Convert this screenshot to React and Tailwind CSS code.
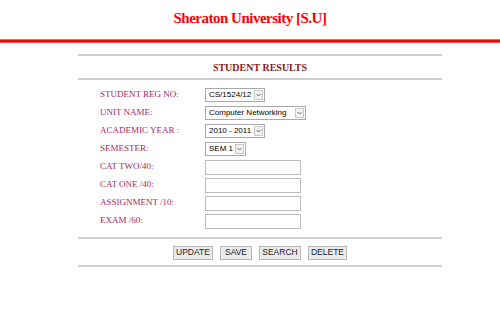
import React from "react";

const serif = { fontFamily: '"Liberation Serif", "Times New Roman", serif' };
const sans = { fontFamily: '"Liberation Sans", Arial, sans-serif' };

function Select({ value, w }) {
  return (
    <div className={`flex h-[14px] items-stretch border border-[#a9a9a9] bg-white ${w}`} style={sans}>
      <div className="flex-1 pl-[3px] text-[8px] leading-[12px] text-black whitespace-nowrap overflow-hidden">{value}</div>
      <div className="my-[1px] mr-[1px] flex w-[9px] items-center justify-center border border-[#c8c8c8] bg-[#f3f3f3]">
        <svg width="5" height="4" viewBox="0 0 5 4"><path d="M0.5 1 L2.5 3 L4.5 1" fill="none" stroke="#666" strokeWidth="1" /></svg>
      </div>
    </div>
  );
}

function Input() {
  return <div className="h-[15px] w-[96px] border border-[#bdbdbd] bg-white" />;
}

function Row({ label, children }) {
  return (
    <div className="flex h-[18px] items-center">
      <div className="w-[105px] text-[9px] text-[#a5285a]" style={serif}>{label}</div>
      {children}
    </div>
  );
}

function Btn({ children, w }) {
  return (
    <div className={`flex h-[14px] items-center justify-center border border-[#b8b8b8] bg-[#ebebeb] text-[8.5px] text-[#222] ${w}`} style={sans}>
      {children}
    </div>
  );
}

export default function App() {
  return (
    <div className="h-[315px] w-[500px] bg-white">
      <div className="flex h-[39px] items-center justify-center pb-[2px]">
        <h1 className="text-[15px] font-bold tracking-[-0.5px] text-[#ff0000]" style={serif}>Sheraton University [S.U]</h1>
      </div>
      <div className="h-[4px] bg-[#ff0000] border-y border-[#ff6060]" />
      <div className="ml-[78px] mt-[11px] w-[364px]">
        <div className="h-[2px] bg-[#cfcfcf]" />
        <div className="flex h-[22px] items-center justify-center text-[10px] font-bold text-[#8b1a1a]" style={serif}>STUDENT RESULTS</div>
        <div className="h-[2px] bg-[#cfcfcf]" />
        <div className="pl-[22px] pt-[6px]">
          <Row label="STUDENT REG NO:"><Select value="CS/1524/12" w="w-[60px]" /></Row>
          <Row label="UNIT NAME:"><Select value="Computer Networking" w="w-[101px]" /></Row>
          <Row label="ACADEMIC YEAR :"><Select value="2010 - 2011" w="w-[60px]" /></Row>
          <Row label="SEMESTER:"><Select value="SEM 1" w="w-[41px]" /></Row>
          <Row label="CAT TWO/40:"><Input /></Row>
          <Row label="CAT ONE /40:"><Input /></Row>
          <Row label="ASSIGNMENT /10:"><Input /></Row>
          <Row label="EXAM /60:"><Input /></Row>
        </div>
        <div className="mt-[7px] h-[2px] bg-[#cfcfcf]" />
        <div className="flex h-[26px] items-center justify-center gap-[7px] pt-[1px]">
          <Btn w="w-[40px]">UPDATE</Btn>
          <Btn w="w-[32px]">SAVE</Btn>
          <Btn w="w-[42px]">SEARCH</Btn>
          <Btn w="w-[39px]">DELETE</Btn>
        </div>
        <div className="h-[2px] bg-[#cfcfcf]" />
      </div>
    </div>
  );
}
